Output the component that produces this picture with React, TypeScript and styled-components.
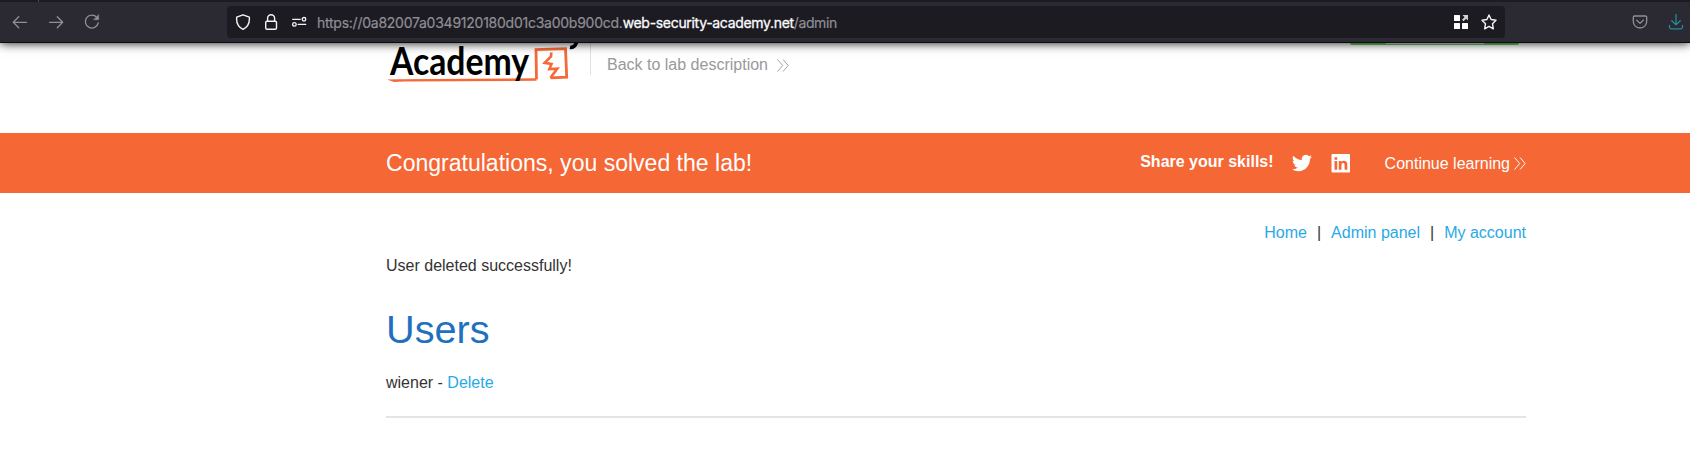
import React from "react";
import styled, { createGlobalStyle } from "styled-components";

const GlobalStyle = createGlobalStyle`
  * { box-sizing: border-box; }
  html, body { margin: 0; background: #fff; }
  body { font-family: "Liberation Sans", Arial, sans-serif; font-size: 16px; line-height: 20px; color: #333; overflow: hidden; }
`;

const Window = styled.div`
  width: 1690px;
  height: 470px;
  overflow: hidden;
  background: #fff;
`;

const Chrome = styled.header`
  position: relative;
  z-index: 2;
  height: 43px;
  background: #2b2a33;
  border-bottom: 1px solid #0c0c0d;
  box-shadow: 0 0 10px rgba(0, 0, 0, 0.95);
`;

const TabStrip = styled.div`
  height: 2px;
  padding-left: 38px;
  background: #1c1b22;
`;

const TabDivider = styled.div`
  width: 1px;
  height: 2px;
  background: #4b4a53;
`;

const Toolbar = styled.div`
  display: flex;
  align-items: center;
  height: 40px;
`;

const NavButtons = styled.div`
  display: flex;
  align-items: center;
  gap: 20px;
  width: 227px;
  padding-left: 12px;
  color: #8f8f95;
`;

const AddressBar = styled.div`
  display: flex;
  align-items: center;
  width: 1278px;
  height: 32px;
  padding: 0 8px;
  border-radius: 4px;
  background: #1c1b22;
  color: #f4f4f6;
`;

const SiteIcons = styled.div`
  display: flex;
  gap: 12px;
  width: 82px;
`;

const Url = styled.div`
  flex: 1;
  font-family: Inter, sans-serif;
  font-size: 14px;
  line-height: 20px;
  color: #8f8e95;
  white-space: nowrap;
  padding-top: 1px;
`;

const UrlPart = styled.span<{ $spacing: number; $host?: boolean }>`
  letter-spacing: ${(p) => p.$spacing}px;
  color: ${(p) => (p.$host ? "#fbfbfe" : "inherit")};
  -webkit-text-stroke: ${(p) => (p.$host ? "0.3px" : "0.2px")};
`;

const PageActions = styled.div`
  display: flex;
  gap: 12px;
`;

const ToolbarEnd = styled.div`
  display: flex;
  gap: 20px;
  padding-left: 127px;
  color: #8f8f95;
`;

const Container = styled.div`
  display: flex;
  width: 1140px;
  margin-left: 386px;
`;

const LabHeader = styled.div`
  height: 90px;
`;

const BackBlock = styled.div`
  display: flex;
  align-items: center;
  gap: 9px;
  height: 32px;
  margin-left: 4px;
  padding: 12px 0 0 16px;
  border-left: 1px solid #e0e0e0;
  color: #999;
`;

const StatusPill = styled.div`
  display: flex;
  justify-content: center;
  width: 169px;
  height: 2px;
  margin-left: auto;
  margin-right: 7px;
  border-radius: 0 0 14px 14px;
  background: #62d05c;
`;

const StatusLabel = styled.div`
  width: 98px;
  height: 1px;
  background: #e4f2e4;
`;

const Banner = styled.section`
  height: 60px;
  background: #f56735;
  color: #fff;
`;

const BannerTitle = styled.div`
  font-size: 23.04px;
  line-height: 60px;
`;

const ShareGroup = styled.div`
  display: flex;
  align-items: center;
  height: 60px;
  margin-left: auto;
`;

const ShareLabel = styled.strong`
  padding-bottom: 3px;
`;

const SocialIcons = styled.div`
  display: flex;
  gap: 19px;
  margin: 0 34px 1px 18px;
`;

const ContinueLink = styled.div`
  display: flex;
  align-items: center;
  gap: 4px;
  padding-top: 1px;
`;

const TopLinks = styled.nav`
  display: flex;
  justify-content: flex-end;
  gap: 10px;
  width: 1140px;
  margin: 30px 0 13px 386px;
`;

const Link = styled.span`
  color: #29a9e6;
`;

const Main = styled.main`
  width: 1140px;
  margin-left: 386px;
  border-bottom: 2px solid #e4e4e4;
`;

const Heading = styled.h1`
  margin: 31px 0 22px;
  font-size: 39.7px;
  line-height: 44px;
  font-weight: 400;
  color: #1f71be;
`;

const UserRow = styled.div`
  padding-bottom: 23px;
`;

const strokeProps = {
  fill: "none",
  stroke: "currentColor",
  strokeLinecap: "round" as const,
  strokeLinejoin: "round" as const,
};

const Chevrons = ({ weight = 1 }: { weight?: number }) => (
  <svg width="12" height="13" viewBox="0 0 12 13" fill="none" stroke="currentColor" strokeWidth={weight}>
    <path d="M.5.5l5.2 6-5.2 6M6 .5l5.2 6-5.2 6" />
  </svg>
);

const Logo = () => (
  <svg width="200" height="50" viewBox="386 43 200 50">
    <path d="M387 79.600 399 79.300l137.500-1v2.400L404 81.600l-10 .3z" fill="#f66936" />
    <path d="M536.500 79.300L536 49.500l29.500-.8 1.200 28.500-16.200.6" fill="none" stroke="#f66936" strokeWidth="2.800" />
    <path d="M551.300 52.500l-.3 4-6.300 6.300 6.800 1.200-2.200 5 8-.4-6.800 9.200" fill="none" stroke="#f66936" strokeWidth="2.600" />
    <path d="M570 47.200q4.500 1 6.500-4.700" fill="none" stroke="#000" strokeWidth="3.600" />
    <text x="390" y="74.500" fontFamily="Lato, sans-serif" fontWeight="700" fontSize="37.500" textLength="139" lengthAdjust="spacingAndGlyphs">Academy</text>
  </svg>
);

export default function App() {
  return (
    <Window>
      <GlobalStyle />
      <Chrome>
        <TabStrip><TabDivider /></TabStrip>
        <Toolbar>
          <NavButtons>
            <svg width="16" height="16" viewBox="0 0 16 16" {...strokeProps} strokeWidth="1.3">
              <path d="M14.500 8.300H1.500M6.700 2.800L1.300 8.300l5.400 5.400" />
            </svg>
            <svg width="16" height="16" viewBox="0 0 16 16" {...strokeProps} strokeWidth="1.3">
              <path d="M1.500 8.300h13M9.300 2.800l5.400 5.500-5.400 5.400" />
            </svg>
            <svg width="16" height="16" viewBox="0 0 16 16" {...strokeProps} strokeWidth="1.3">
              <path d="M12.800 3.300A6.500 6.500 0 1 0 14.200 9" />
              <path d="M14.600 1v4.700H10z" fill="currentColor" strokeWidth=".6" />
            </svg>
          </NavButtons>
          <AddressBar>
            <SiteIcons>
              <svg width="16" height="16" viewBox="0 0 16 16" {...strokeProps} strokeWidth="1.4">
                <path d="M8 .8l6.300 2.400c.6 5.800-1.700 9.900-6.300 12.200C3.400 13.100 1.100 9 1.700 3.200z" />
              </svg>
              <svg width="16" height="16" viewBox="0 0 16 16" {...strokeProps} strokeWidth="1.4">
                <rect x="2.700" y="7.300" width="10.800" height="7.900" rx="1.300" />
                <path d="M4.600 7.200V4.300a3.500 3.500 0 0 1 7 0v2.900" />
              </svg>
              <svg width="16" height="16" viewBox="0 0 16 16" {...strokeProps} strokeWidth="1.3">
                <circle cx="13" cy="5.300" r="1.800" />
                <circle cx="3.400" cy="10.400" r="1.800" />
                <path d="M1.700 5.300h7.500M7.200 10.400h7.500" />
              </svg>
            </SiteIcons>
            <Url>
              <UrlPart $spacing={-0.25}>https://0a82007a0349120180d01c3a00b900cd.</UrlPart>
              <UrlPart $spacing={-0.31} $host>web-security-academy.net</UrlPart>
              <UrlPart $spacing={-0.42}>/admin</UrlPart>
            </Url>
            <PageActions>
              <svg width="16" height="16" viewBox="0 0 16 16" fill="#fff">
                <rect x="1" y="1" width="6" height="6" rx=".5" />
                <rect x="1" y="9" width="6" height="6" rx=".5" />
                <rect x="9" y="9" width="6" height="6" rx=".5" />
                <path d="M9.500 1H15v5.500l-1.900-1.800L10.500 7.300 9 5.800l2.500-2.500z" opacity=".8" />
              </svg>
              <svg width="16" height="16" viewBox="0 0 16 16" {...strokeProps} strokeWidth="1.4">
                <path d="M8 1l2.100 4.500 4.900.7-3.500 3.500.8 5.100L8 12.400l-4.300 2.400.8-5.100L1 6.200l4.900-.7z" />
              </svg>
            </PageActions>
          </AddressBar>
          <ToolbarEnd>
            <svg width="16" height="16" viewBox="0 0 16 16" {...strokeProps} strokeWidth="1.3">
              <path d="M2.500 2h11a1.200 1.200 0 0 1 1.200 1.200V7.500a6.700 6.500 0 0 1-13.400 0V3.200A1.200 1.200 0 0 1 2.500 2z" />
              <path d="M4.700 6.300L8 9.400l3.300-3.100" />
            </svg>
            <svg width="16" height="16" viewBox="0 0 16 16" {...strokeProps} strokeWidth="1.3" color="#268a9c">
              <path d="M8 .5v10.300M3.800 6.800L8 10.900l4.200-4.100M1.500 11.500v1.800a1.500 1.500 0 0 0 1.500 1.500h10a1.500 1.500 0 0 0 1.500-1.500v-1.800" />
            </svg>
          </ToolbarEnd>
        </Toolbar>
      </Chrome>

      <LabHeader>
        <Container>
          <Logo />
          <BackBlock>Back to lab description <Chevrons weight={0.9} /></BackBlock>
          <StatusPill><StatusLabel /></StatusPill>
        </Container>
      </LabHeader>

      <Banner>
        <Container>
          <BannerTitle>Congratulations, you solved the lab!</BannerTitle>
          <ShareGroup>
            <ShareLabel>Share your skills!</ShareLabel>
            <SocialIcons>
              <svg width="20" height="20" viewBox="0 0 24 24" fill="#fff">
                <path d="M23.950 4.570a10 10 0 0 1-2.820.78 4.960 4.960 0 0 0 2.160-2.730c-.950.560-2 .960-3.130 1.190a4.920 4.920 0 0 0-8.380 4.480A13.930 13.930 0 0 1 1.640 3.160a4.920 4.920 0 0 0 1.520 6.570 4.900 4.900 0 0 1-2.230-.61v.06a4.920 4.920 0 0 0 3.950 4.830 5 5 0 0 1-2.210.08 4.940 4.940 0 0 0 4.600 3.420A9.870 9.870 0 0 1 0 19.540a14 14 0 0 0 7.550 2.210c9.050 0 14-7.500 14-13.990l-.01-.63a9.900 9.900 0 0 0 2.410-2.560z" />
              </svg>
              <svg width="20" height="20" viewBox="0 0 20 20">
                <rect x="0.500" y="1" width="18.500" height="18.500" rx="1" fill="#fff" />
                <path d="M3.500 8h2.700v8.700H3.500zM3.500 4.200h2.700v2.500H3.500zM7.800 8h2.600v1.200c1.200-2.200 5.900-2 5.900 2.100v5.400h-2.700v-4.900c0-2.400-3.100-2.200-3.100 0v4.900H7.800z" fill="#f56735" />
              </svg>
            </SocialIcons>
            <ContinueLink>Continue learning <Chevrons /></ContinueLink>
          </ShareGroup>
        </Container>
      </Banner>

      <TopLinks>
        <Link>Home</Link><span>|</span><Link>Admin panel</Link><span>|</span><Link>My account</Link>
      </TopLinks>
      <Main>
        <div>User deleted successfully!</div>
        <Heading>Users</Heading>
        <UserRow>wiener - <Link>Delete</Link></UserRow>
      </Main>
    </Window>
  );
}
